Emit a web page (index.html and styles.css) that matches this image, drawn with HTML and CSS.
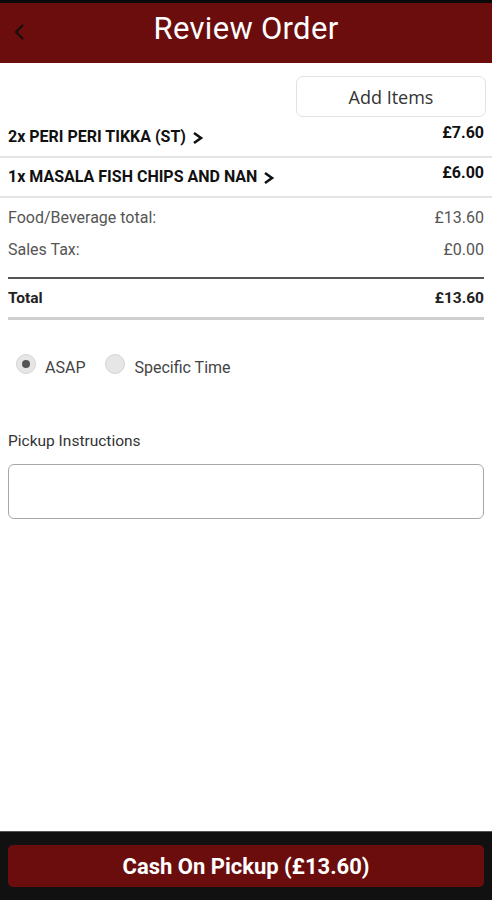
FILE: index.html
```html
<!DOCTYPE html>
<html lang="en">
<head>
  <meta charset="UTF-8">
  <title>Review Order</title>
  <meta name="viewport" content="width=device-width, initial-scale=1.0">
  <link rel="stylesheet" href="styles.css">
</head>
<body>

  <!-- ====== Header ====== -->
  <header class="topbar">
    <a class="back" href="#">
      <svg width="14" height="20" viewBox="0 0 14 20"><path d="M11 3 L4 10 L11 17" fill="none" stroke="#111" stroke-width="2"/></svg>
    </a>
    <h1>Review Order</h1>
  </header>

  <main class="content">
    <div class="add-row">
      <button class="add-btn">Add Items</button>
    </div>

    <!-- ====== Order Items ====== -->
    <div class="item">
      <span class="item-name">2x PERI PERI TIKKA (ST)
        <svg class="chev" width="12" height="14" viewBox="0 0 12 14"><path d="M2 2 L9 7 L2 12" fill="none" stroke="#111" stroke-width="2.6"/></svg>
      </span>
      <span class="item-price">£7.60</span>
    </div>
    <div class="item">
      <span class="item-name">1x MASALA FISH CHIPS AND NAN
        <svg class="chev" width="12" height="14" viewBox="0 0 12 14"><path d="M2 2 L9 7 L2 12" fill="none" stroke="#111" stroke-width="2.6"/></svg>
      </span>
      <span class="item-price">£6.00</span>
    </div>

    <!-- ====== Totals ====== -->
    <div class="totals">
      <div class="line"><span>Food/Beverage total:</span><span>£13.60</span></div>
      <div class="line"><span>Sales Tax:</span><span>£0.00</span></div>
    </div>
    <div class="grand">
      <span>Total</span><span>£13.60</span>
    </div>

    <!-- ====== Pickup Time ====== -->
    <div class="times">
      <label class="radio"><span class="dot checked"></span>ASAP</label>
      <label class="radio"><span class="dot"></span>Specific Time</label>
    </div>

    <div class="instructions">
      <div class="inst-label">Pickup Instructions</div>
      <textarea class="inst-box"></textarea>
    </div>
  </main>

  <!-- ====== Footer ====== -->
  <footer class="bottombar">
    <button class="pay-btn">Cash On Pickup (£13.60)</button>
  </footer>

</body>
</html>
```

FILE: styles.css
```css
/* ====== General ====== */
* {
  box-sizing: border-box;
}

html, body {
  height: 100%;
}

body {
  margin: 0;
  font-family: Roboto, "Liberation Sans", sans-serif;
  background: #fff;
  color: #222;
  display: flex;
  flex-direction: column;
}

/* ====== Header ====== */
.topbar {
  height: 63px;
  border-top: 3px solid #0a0a0a;
  background: #6b0d0d;
  display: flex;
  align-items: center;
  justify-content: center;
  padding-bottom: 9px;
  position: relative;
}

.topbar h1 {
  margin: 0;
  color: #fff;
  font-weight: 400;
  font-size: 31px;
  letter-spacing: 0.3px;
}

.back {
  position: absolute;
  left: 12px;
  top: 19px;
}

/* ====== Content ====== */
.content {
  flex: 1;
  padding: 0 8px;
}

.add-row {
  display: flex;
  justify-content: flex-end;
  padding-top: 13px;
  padding-bottom: 1px;
  margin-right: -2px;
}

.add-btn {
  width: 190px;
  height: 41px;
  background: #fff;
  border: 1px solid #e2e2e2;
  border-radius: 7px;
  font-family: "Open Sans", sans-serif;
  font-size: 18px;
  color: #333;
}

.item {
  display: flex;
  justify-content: space-between;
  height: 40px;
  border-bottom: 2px solid #e4e4e4;
  margin: 0 -8px;
  padding: 0 8px;
}

.item-name {
  font-weight: 700;
  font-size: 16px;
  color: #111;
  padding-top: 9px;
  display: flex;
  align-items: center;
  align-self: flex-start;
  gap: 6px;
}

.chev {
  margin-top: 2px;
}

.item-price {
  font-weight: 700;
  font-size: 16px;
  color: #111;
  padding-top: 5px;
}

.totals {
  padding-top: 10px;
  padding-bottom: 5px;
  border-bottom: 2px solid #555;
}

.line {
  display: flex;
  justify-content: space-between;
  font-size: 16px;
  color: #555;
  height: 32px;
}

.grand {
  display: flex;
  justify-content: space-between;
  font-weight: 700;
  font-size: 15.5px;
  color: #222;
  padding-top: 10px;
  height: 41px;
  border-bottom: 3px solid #cfcfcf;
}

/* ====== Radios ====== */
.times {
  display: flex;
  gap: 20px;
  padding: 37px 0 0 8px;
}

.radio {
  display: flex;
  align-items: center;
  gap: 9px;
  font-size: 16px;
  color: #444;
}

.dot {
  width: 20px;
  height: 20px;
  border-radius: 50%;
  background: #e6e6e6;
  border: 1px solid #d4d4d4;
  position: relative;
  top: -3px;
}

.dot.checked::after {
  content: "";
  position: absolute;
  left: 5px;
  top: 5px;
  width: 8px;
  height: 8px;
  border-radius: 50%;
  background: #555;
}

/* ====== Instructions ====== */
.instructions {
  padding-top: 55px;
}

.inst-label {
  font-size: 15.5px;
  color: #333;
  margin-bottom: 14px;
}

.inst-box {
  display: block;
  width: 100%;
  height: 55px;
  border: 1px solid #a8a8a8;
  border-radius: 6px;
  resize: none;
}

/* ====== Footer ====== */
.bottombar {
  height: 69px;
  background: #111;
  border-top: 1px solid #555;
  padding: 13px 8px 0 8px;
}

.pay-btn {
  width: 100%;
  height: 42px;
  border: none;
  border-radius: 5px;
  background: #6b0d0d;
  color: #fff;
  font-family: Roboto, sans-serif;
  font-weight: 700;
  font-size: 22px;
}
```
